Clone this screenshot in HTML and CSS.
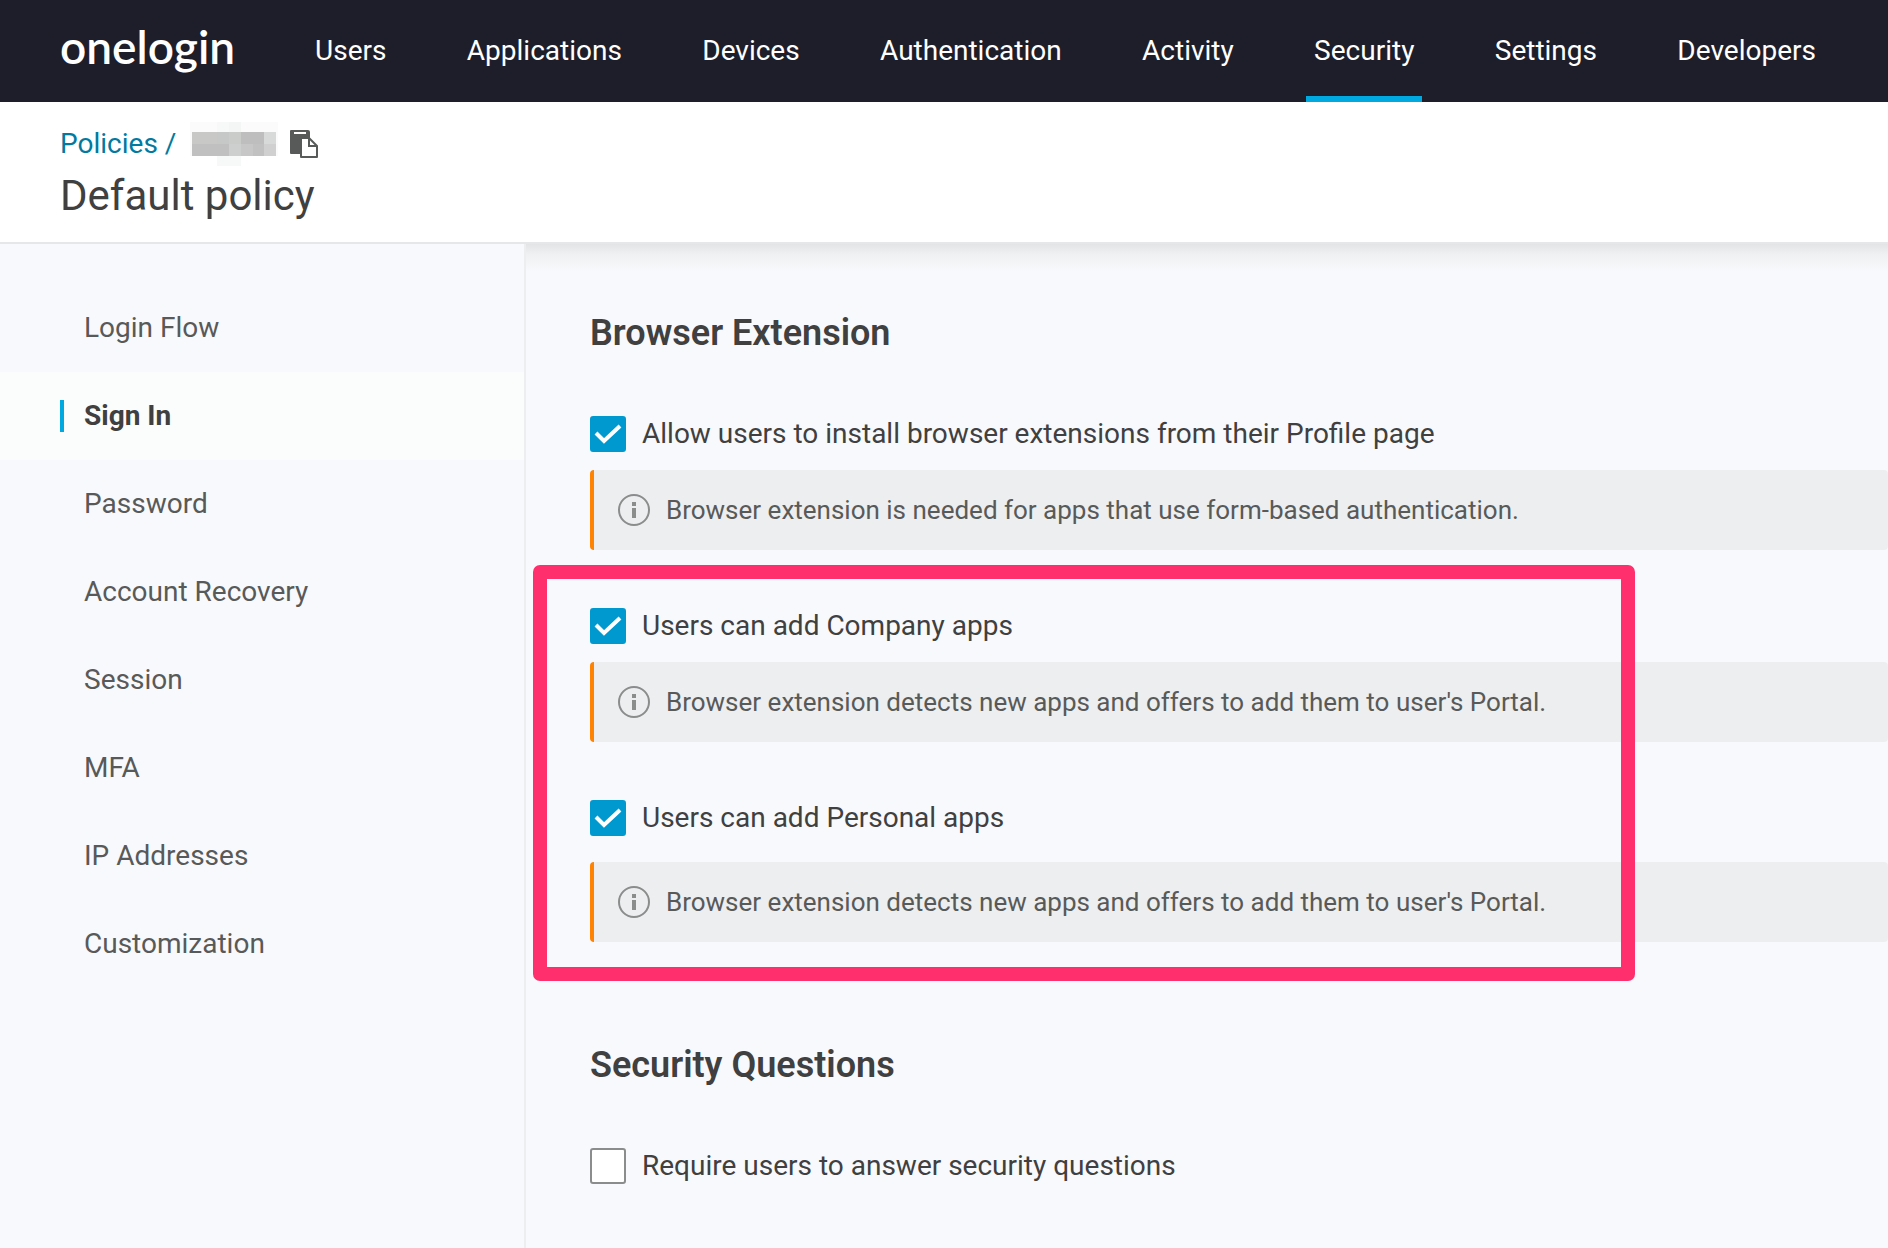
FILE: index.html
```html
<!DOCTYPE html>
<html lang="en">
<head>
    <meta charset="UTF-8">
    <meta name="viewport" content="width=device-width, initial-scale=1.0">
    <title>Default policy - OneLogin</title>
    <link rel="stylesheet" href="styles.css">
</head>
<body>
    <!-- Top navigation -->
    <header class="topbar">
        <a class="logo" href="#">onelogin</a>
        <nav class="topnav">
            <a href="#">Users</a>
            <a href="#">Applications</a>
            <a href="#">Devices</a>
            <a href="#">Authentication</a>
            <a href="#">Activity</a>
            <a href="#" class="current">Security</a>
            <a href="#">Settings</a>
            <a href="#">Developers</a>
        </nav>
    </header>

    <!-- Breadcrumb and page title -->
    <div class="page-head">
        <div class="breadcrumb">
            <a href="#">Policies /</a>
            <svg class="masked-id" width="88" height="44" viewBox="0 0 88 44" shape-rendering="crispEdges" aria-hidden="true">
                <rect width="88" height="34" fill="#fbfbfb"/>
                <rect x="27" width="12" height="10" fill="#f7f8f8"/>
                <rect x="39" width="12" height="10" fill="#f4f6f6"/>
                <rect x="27" y="34" width="24" height="10" fill="#f7f8f8"/>
                <rect x="2" y="10" width="25" height="12" fill="#c8c8c7"/>
                <rect x="27" y="10" width="12" height="12" fill="#c6c8c7"/>
                <rect x="39" y="10" width="12" height="12" fill="#caccca"/>
                <rect x="51" y="10" width="23" height="12" fill="#bebebe"/>
                <rect x="74" y="10" width="12" height="12" fill="#d8dad9"/>
                <rect x="2" y="22" width="37" height="12" fill="#bfc0bf"/>
                <rect x="39" y="22" width="12" height="12" fill="#cccfcd"/>
                <rect x="51" y="22" width="12" height="12" fill="#c6c7c6"/>
                <rect x="63" y="22" width="11" height="12" fill="#c1c1c1"/>
                <rect x="74" y="22" width="12" height="12" fill="#d0d0d0"/>
            </svg>
            <button type="button" class="copy" aria-label="Copy policy ID">
                <svg width="28" height="28" viewBox="0 0 28 28">
                    <path fill="#585a59" d="M1 0h17q2 0 2 2v6h-9v16H1q-1 0-1-1V1q0-1 1-1z"/>
                    <path fill="#fff" d="M4 2h12v2H4z"/>
                    <path fill="#fff" stroke="#585a59" stroke-width="2" stroke-linejoin="round" d="M11 8h8l8 8v11H11z"/>
                    <path fill="none" stroke="#585a59" stroke-width="2" d="M19 8v8h8"/>
                </svg>
            </button>
        </div>
        <h1>Default policy</h1>
    </div>

    <div class="layout">
        <!-- Policy sections -->
        <aside class="sidebar">
            <a href="#">Login Flow</a>
            <a href="#" class="active">Sign In</a>
            <a href="#">Password</a>
            <a href="#">Account Recovery</a>
            <a href="#">Session</a>
            <a href="#">MFA</a>
            <a href="#">IP Addresses</a>
            <a href="#">Customization</a>
        </aside>

        <main class="content">
            <h2>Browser Extension</h2>
            <div class="setting">
                <label class="option" for="install"><input type="checkbox" id="install" checked>Allow users to install browser extensions from their Profile page</label>
                <p class="note">
                    <svg width="32" height="32" viewBox="0 0 32 32" aria-hidden="true"><circle cx="16" cy="16" r="15" fill="none" stroke="#8b8c8c" stroke-width="2"/><path fill="#8b8c8c" d="M14 8h4v4h-4zM14 14h4v10h-4z"/></svg>
                    Browser extension is needed for apps that use form-based authentication.
                </p>
            </div>

            <div class="highlight">
                <div class="setting">
                    <label class="option" for="company"><input type="checkbox" id="company" checked>Users can add Company apps</label>
                    <p class="note">
                        <svg width="32" height="32" viewBox="0 0 32 32" aria-hidden="true"><circle cx="16" cy="16" r="15" fill="none" stroke="#8b8c8c" stroke-width="2"/><path fill="#8b8c8c" d="M14 8h4v4h-4zM14 14h4v10h-4z"/></svg>
                        Browser extension detects new apps and offers to add them to user's Portal.
                    </p>
                </div>
                <div class="setting spaced">
                    <label class="option" for="personal"><input type="checkbox" id="personal" checked>Users can add Personal apps</label>
                    <p class="note">
                        <svg width="32" height="32" viewBox="0 0 32 32" aria-hidden="true"><circle cx="16" cy="16" r="15" fill="none" stroke="#8b8c8c" stroke-width="2"/><path fill="#8b8c8c" d="M14 8h4v4h-4zM14 14h4v10h-4z"/></svg>
                        Browser extension detects new apps and offers to add them to user's Portal.
                    </p>
                </div>
            </div>

            <h2>Security Questions</h2>
            <div class="setting">
                <label class="option" for="questions"><input type="checkbox" id="questions">Require users to answer security questions</label>
            </div>
        </main>
    </div>
</body>
</html>
```
FILE: styles.css
```css
* {
    box-sizing: border-box;
}

body {
    margin: 0;
    min-height: 100vh;
    display: flex;
    flex-direction: column;
    font-family: Roboto, sans-serif;
    font-size: 28px;
    line-height: 36px;
    color: #3f403f;
    background: #f8f9fc;
}

a {
    color: inherit;
    text-decoration: none;
}

/* Top navigation */
.topbar {
    display: flex;
    height: 102px;
    padding: 0 64px 0 60px;
    background: #1d1e2a;
    color: #fff;
}

.logo {
    font-family: Lato, sans-serif;
    font-size: 46px;
    font-weight: 600;
    line-height: 94px;
    margin-right: 72px;
}

.topnav {
    flex: 1;
    display: flex;
    justify-content: space-between;
}

.topnav a {
    padding: 0 8px;
    line-height: 102px;
}

.topnav .current {
    border-bottom: 6px solid #00a9e0;
}

/* Page head */
.page-head {
    padding: 20px 60px;
    background: #fff;
    border-bottom: 2px solid #e6e7e9;
}

.breadcrumb {
    display: flex;
    align-items: center;
    height: 44px;
    color: #007a9f;
}

.masked-id {
    margin-left: 14px;
}

.copy {
    display: flex;
    margin-left: 12px;
    padding: 0;
    border: 0;
    background: none;
}

.page-head h1 {
    margin: 4px 0 0;
    font-size: 42px;
    font-weight: 400;
    line-height: 52px;
}

/* Columns */
.layout {
    flex: 1;
    display: flex;
}

.sidebar {
    width: 526px;
    padding-top: 40px;
    border-right: 2px solid #edeef0;
    color: #585a59;
}

.sidebar a {
    display: flex;
    align-items: center;
    height: 88px;
    padding-left: 84px;
}

.sidebar .active {
    padding-left: 60px;
    background: #fbfdfc;
    color: #3f403f;
    font-weight: 700;
}

.sidebar .active::before {
    content: "";
    width: 4px;
    height: 32px;
    margin-right: 20px;
    background: #00a9e0;
}

.content {
    flex: 1;
    padding: 64px 0 60px 64px;
    background: linear-gradient(#e3e4e6, #eff0f2 10px, #f8f9fc 28px);
}

.content h2 {
    margin: 0 0 58px;
    font-size: 36px;
    font-weight: 600;
    line-height: 50px;
}

.highlight + h2 {
    margin-top: 98px;
}

.option {
    display: flex;
    align-items: center;
    gap: 16px;
}

.option input {
    appearance: none;
    width: 36px;
    height: 36px;
    margin: 0;
    border: 2px solid #8b8c8c;
    border-radius: 3px;
    background: #fff;
}

.option input:checked {
    border-color: #0099cf;
    background: #0099cf url("data:image/svg+xml,%3Csvg xmlns='http://www.w3.org/2000/svg' viewBox='0 0 36 36'%3E%3Cpath d='M6 17l8 8L30 10' fill='none' stroke='white' stroke-width='4'/%3E%3C/svg%3E") center / 36px no-repeat;
}

.note {
    display: flex;
    align-items: center;
    gap: 16px;
    height: 80px;
    margin: 18px 0 0;
    padding-left: 24px;
    border-left: 4px solid #ff8200;
    border-radius: 4px;
    background: #edeef0;
    color: #585a59;
    font-size: 26px;
}

.spaced .note {
    margin-top: 26px;
}

/* Frame drawn around the two app options */
.highlight {
    position: relative;
    margin-top: 58px;
}

.highlight .spaced {
    margin-top: 58px;
}

.highlight::after {
    content: "";
    position: absolute;
    inset: -43px 253px -39px -57px;
    border: 14px solid #ff2f6d;
    border-radius: 7px;
    pointer-events: none;
}
```
